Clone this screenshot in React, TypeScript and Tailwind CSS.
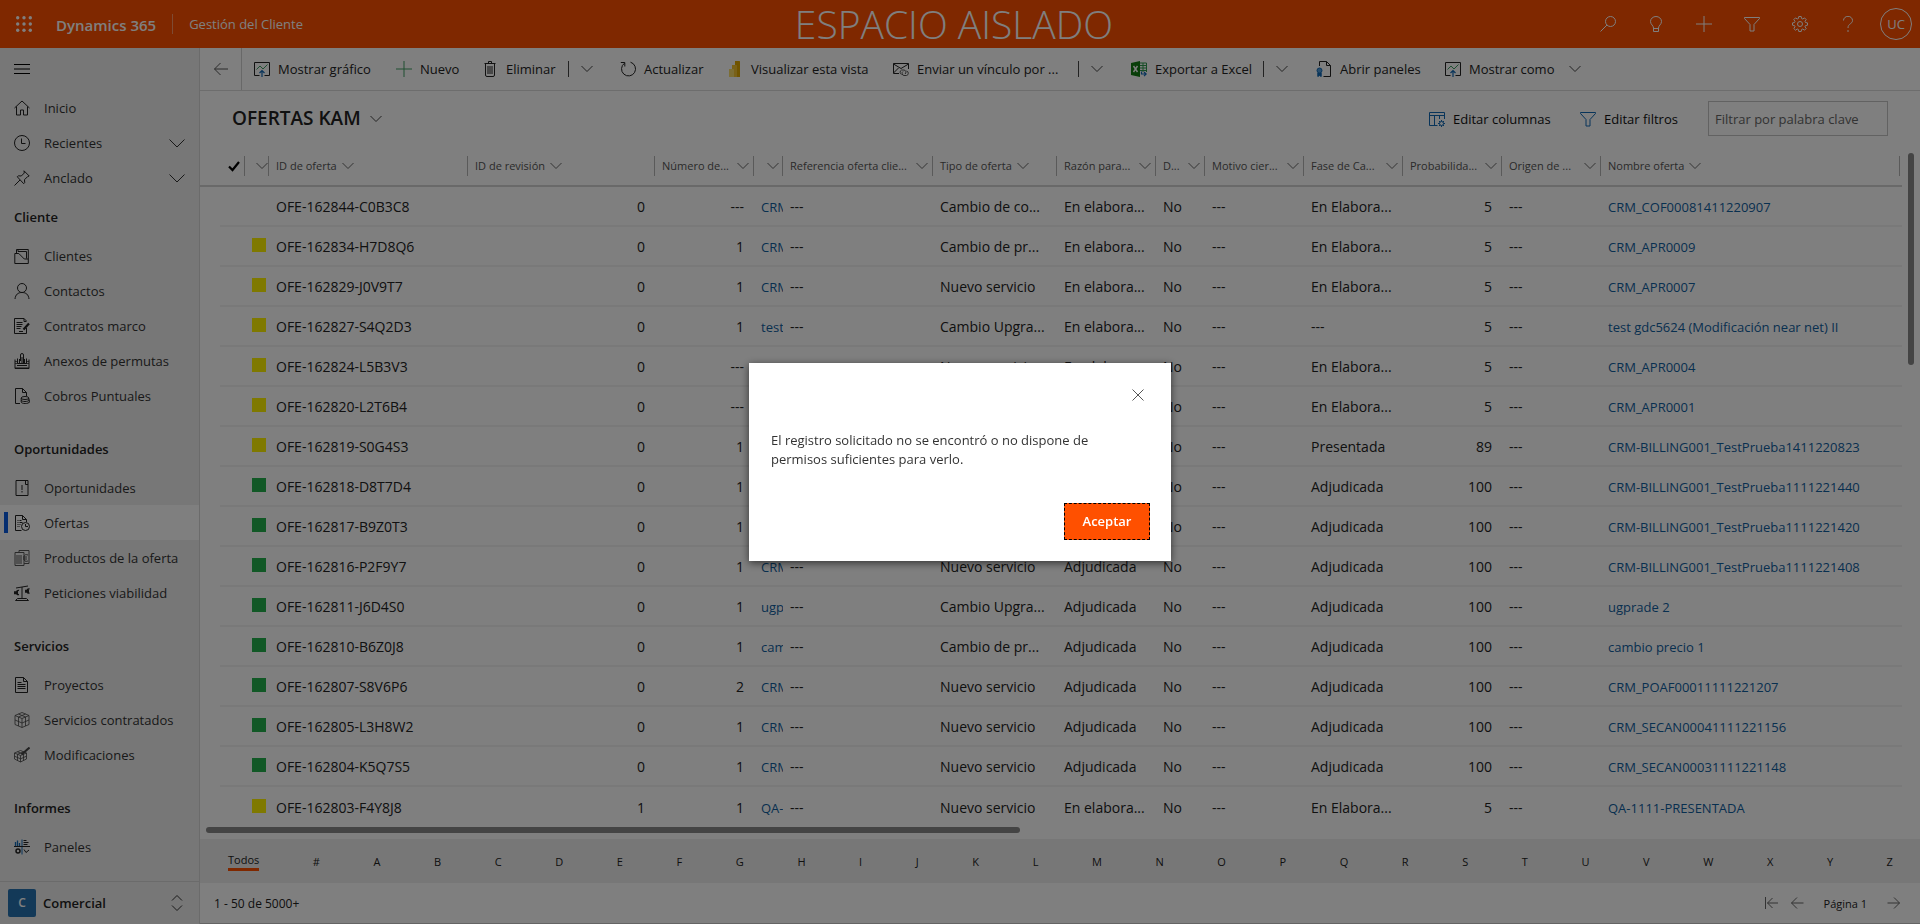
import type { ReactNode } from 'react';

type IconProps = { children: ReactNode; className?: string; size?: number };

function Icon({ children, className = '', size = 16 }: IconProps) {
  return (
    <svg
      viewBox={`0 0 ${size} ${size}`}
      width={size}
      height={size}
      fill="none"
      stroke="currentColor"
      strokeWidth="1"
      className={`shrink-0 ${className}`}
      aria-hidden="true"
    >
      {children}
    </svg>
  );
}

const Chevron = ({ className = 'text-[#444444]' }: { className?: string }) => (
  <svg viewBox="0 0 12 8" width="12" height="8" fill="none" stroke="currentColor" className={`shrink-0 ${className}`} aria-hidden="true">
    <path d="M.5 1l5.500 5.500L11.500 1" />
  </svg>
);

const ArrowLeft = () => (
  <Icon>
    <path d="M15 8H1.500M7.500 2L1.500 8l6 6" />
  </Icon>
);

const ChartIcon = () => (
  <Icon className="text-[#222222]">
    <path d="M5.500 14.500H.5V1.500h15v13h-5" />
    <path d="M2.500 8.500l3.500-3.500 3 3 4.500-4.500" stroke="#3f9f63" />
    <path d="M8 16V9.500M5.500 12L8 9.500l2.500 2.500" stroke="#1068b5" strokeWidth="1.200" />
  </Icon>
);

const PlusIcon = ({ className = '' }: { className?: string }) => (
  <Icon className={className}>
    <path d="M8 0v16M0 8h16" />
  </Icon>
);

const TrashIcon = () => (
  <Icon className="text-[#222222]">
    <path d="M2.500 2.500h11M6.500 2.500v-2h3v2M3.500 2.500v11.500q0 1.500 1.500 1.500h6q1.500 0 1.500-1.500V2.500M6 5v8M8 5v8M10 5v8" />
  </Icon>
);

const RefreshIcon = () => (
  <Icon className="text-[#222222]">
    <path d="M10.500 1.200A7 7 0 1 1 4.500 2.200M.8 1.500h4v4" />
  </Icon>
);

const PowerBiIcon = () => (
  <Icon>
    <path d="M8 0h4.500q.5 0 .5.500V16H8z" fill="#e0a800" stroke="none" />
    <path d="M5 4h4.500q.5 0 .5.500V16H5z" fill="#f2c230" stroke="none" />
    <path d="M2 8h4.500q.5 0 .5.500V16H2.500q-.5 0-.5-.5z" fill="#f8dc6a" stroke="none" />
  </Icon>
);

const MailLinkIcon = () => (
  <Icon className="text-[#222222]">
    <path d="M6 12.500H.5V2.500h15V8M.5 3L8 7.500 15.500 3M.5 12l5-5" />
    <path d="M8.500 13.500a2.500 2.500 0 0 1 0-4.500h2.500a2.200 2.200 0 0 1 1 4M13.500 10a2.300 2.300 0 0 1 0 4.500H11a2.200 2.200 0 0 1-1-4" stroke="#555555" />
  </Icon>
);

const ExcelIcon = () => (
  <Icon>
    <path d="M9 2h6.500v9M9 4.500h6.500M9 7h6.500M9 9.500h6.500M12 2v9" stroke="#2e9b4f" />
    <path d="M0 2l9-2v16l-9-2z" fill="#107c10" stroke="none" />
    <path d="M2.500 5l4 6M6.500 5l-4 6" stroke="#ffffff" strokeWidth="1.400" />
    <path d="M10.500 10.500v2.500h4.500M13 11l2.200 2-2.200 2.200" stroke="#1068b5" strokeWidth="1.200" />
  </Icon>
);

const PanelsIcon = () => (
  <Icon className="text-[#222222]">
    <path d="M3.500 5V.5h7l4 4v11h-7M10.500.5v4h4" />
    <circle cx="3.500" cy="9.500" r="2.500" fill="#4f9bd8" stroke="#1068b5" />
    <path d="M1.800 12v3.500l1.700-1 1.700 1V12" fill="#1068b5" stroke="#1068b5" />
  </Icon>
);

const ColumnsIcon = () => (
  <Icon className="text-[#1068b5]">
    <path d="M8.500 14.500H.5V1.500h15V8M.5 4.500h15M5.500 4.500v10M10.500 4.500V8" />
    <circle cx="12.500" cy="12.500" r="2" />
    <path d="M12.500 9v1.500M12.500 14.500V16M9 12.500h1.500M14.500 12.500H16M10 10l1 1M14 14l1 1M15 10l-1 1M11 14l-1 1" />
  </Icon>
);

const FunnelIcon = ({ className = '' }: { className?: string }) => (
  <Icon className={className}>
    <path d="M.5 1.500h15v1L10 8.500v6.500H6V8.500L.5 2.500z" />
  </Icon>
);

const SearchIcon = () => (
  <Icon>
    <circle cx="10.500" cy="5.500" r="5" />
    <path d="M7 9L.5 15.500" />
  </Icon>
);

const BulbIcon = () => (
  <Icon>
    <path d="M5.500 15.500v-3.500C5.500 9.500 2.500 8.500 2.500 5.500a5.500 5 0 0 1 11 0C13.500 8.500 10.500 9.500 10.500 12v3.500zM5.500 12.500h5" />
  </Icon>
);

const GearIcon = () => (
  <Icon>
    <circle cx="8" cy="8" r="2.500" />
    <path d="M6.800.5h2.400l.4 2 1.200.5L12.500 1.900l1.700 1.700-1.200 1.700.5 1.200 2 .4v2.300l-2 .4-.5 1.200 1.200 1.700-1.700 1.700-1.700-1.200-1.200.5-.4 2H6.800l-.4-2-1.200-.5-1.700 1.200-1.700-1.700 1.200-1.700-.5-1.200-2-.4V6.900l2-.4.5-1.200L1.800 3.600l1.700-1.700L5.200 3l1.200-.5z" />
  </Icon>
);

const HelpIcon = () => (
  <Icon>
    <path d="M3.500 4.500a4.300 4 0 0 1 9 0C12.500 8 8 7.500 8 12M8 14v2" />
  </Icon>
);

const navIcons: Record<string, ReactNode> = {
  Inicio: <path d="M.5 8L8 1l7.500 7M2.500 6.500v8.500h4v-5h3v5h4V6.500" />,
  Recientes: (
    <>
      <circle cx="8" cy="8" r="7.500" />
      <path d="M7.500 3.500v5h4" />
    </>
  ),
  Anclado: <path d="M10 .8L15.200 6l-1.700.7-3 3 .2 3-1 1L3.300 6.800l1-1 3 .2 3-3zM6 10L.5 15.500" />,
  Clientes: <path d="M.8 5.500v10h13.500V1.500H2.500v4M4 3.500h8.500v7M.8 5.500h4l5.500 5.500h4M4 1v2.500" />,
  Contactos: (
    <>
      <circle cx="8" cy="5" r="4.500" />
      <path d="M1 16c.5-4.500 3-6.500 7-6.500s6.500 2 7 6.500" />
    </>
  ),
  'Contratos marco': (
    <>
      <path d="M12.500 10v5.500H.5V.5H10l2.500 2.500M5 13.500h4" />
      <path d="M2.500 4.500h6M2.500 6.500h6M2.500 8.500h5M2.500 10.500h4" />
      <path d="M9.500 11.500l5.500-6" strokeWidth="2.200" />
      <path d="M10 .5v3h2.500" />
    </>
  ),
  'Anexos de permutas': (
    <>
      <path d="M1 6.500v9h14v-9M1 15h14M3.500 5.500v5h9v-5M3 12.500h10M5.500 6v5M10.500 6v5" />
      <path d="M6.500 8V2a1.500 1.500 0 0 1 3 0v8M8 4v6" />
      <path d="M1 8.500h2.500M12.500 8.500H15M1 10.500h14" strokeWidth=".7" />
    </>
  ),
  'Cobros Puntuales': (
    <>
      <path d="M6 15.500H1.500V.5h7l4 4V8M8.500.5v4h4" />
      <ellipse cx="11" cy="10" rx="3.800" ry="1.500" />
      <path d="M7.200 10v4c0 2 8 2 8 0M7.200 12c0 2 7.600 2 7.600 0v-2M15.300 11.500v3" />
    </>
  ),
  Oportunidades: <path d="M2 .5h12v15H2zM11.500.5v4h2.500M8 5v5M8 11v1.500" />,
  Ofertas: (
    <>
      <path d="M7.500 15.500h-6V.5h7l4 4V7M8.500.5v4h4" />
      <path d="M3.500 5.500h4M3.500 7.500h5M3.500 9.500h3M3.500 11.500h2.500" strokeDasharray="1 1 4 0" />
      <circle cx="11.500" cy="11.500" r="4" />
      <path d="M11.500 9v2.500h2.500" />
    </>
  ),
  'Productos de la oferta': (
    <g stroke="#555555">
      <path d="M1 2.500h9v13H1zM5 2.500v-2h10v13h-5" />
      <path d="M3 5v9M5 5v9M7 5v9" strokeWidth="1.500" stroke="#888888" />
      <path d="M14 5c-3-1-4 0-4 3s1 4 4 3M9 7h4M9 9h4" />
    </g>
  ),
  'Peticiones viabilidad': (
    <>
      <path d="M2 3l12-2M8 2v12M1.500 15.500h13l-2-2h-9z" />
      <path d="M5 5.500c-3-1-3.500 5 0 4M0 7h4M0 8.500h4M15.500 4c-3-1-3.500 5 0 4M11 5.500h4M11 7h4" strokeWidth="1.400" />
    </>
  ),
  Proyectos: (
    <>
      <path d="M1.500.5h8l4 4v11h-12zM9.500.5v4h4" />
      <path d="M3.500 5.500h4M3.500 7.500h8M3.500 9.500h8M3.500 11.500h8" />
    </>
  ),
  'Servicios contratados': (
    <g stroke="#444444" strokeWidth=".8">
      <path d="M8 .5l7 3v9l-7 3-7-3v-9zM1 3.500l7 3 7-3M8 6.500v9M1 8l7 3 7-3M4.500 2l7 3v9M11.500 2l-7 3v9" />
    </g>
  ),
  Modificaciones: (
    <g stroke="#444444" strokeWidth=".8">
      <path d="M6.500 3.500l6 2.500v6l-6 3-6-3V6zM.5 6l6 2.500L12.500 6M6.500 8.500V15M.5 9.200l6 2.600 6-2.600M3.500 4.800l6 2.500v6.200M9.500 4.800l-6 2.500v6.200" />
      <path d="M7.500 7.500L15.500.5" strokeWidth="2" />
    </g>
  ),
  Paneles: (
    <>
      <path d="M8 .5v15" stroke="#1068b5" />
      <path d="M0 7.500h16M9.500 1.500h3M9.500 3.500h5M9.500 5.500h4" />
      <path d="M1.500 3v4M3.500 1.500V7M5.500 4v3" stroke="#1068b5" strokeWidth="1.300" />
      <circle cx="4" cy="12" r="2" strokeWidth="1.500" />
      <path d="M10 10.500l2 3 3-2.500" />
    </>
  ),
};

function NavItem({ label, active = false, expandable = false }: { label: string; active?: boolean; expandable?: boolean }) {
  return (
    <li>
      <a
        href="#"
        aria-current={active ? 'page' : undefined}
        className={`flex h-[35px] items-center pr-[14px] text-[13px] text-[#333333] ${active ? 'bg-white' : ''}`}
      >
        <span className={`ml-1 mr-[6px] h-[21px] w-1 ${active ? 'bg-[#0a5ce0]' : ''}`} />
        <Icon className="mr-[14px] text-[#222222]">{navIcons[label]}</Icon>
        <span className="grow whitespace-nowrap pt-0.5">{label}</span>
        {expandable && (
          <Icon className="text-[#333333]">
            <path d="M.5 4.500L8 12l7.500-7.500" />
          </Icon>
        )}
      </a>
    </li>
  );
}

const navGroups = [
  { title: 'Cliente', items: ['Clientes', 'Contactos', 'Contratos marco', 'Anexos de permutas', 'Cobros Puntuales'] },
  { title: 'Oportunidades', items: ['Oportunidades', 'Ofertas', 'Productos de la oferta', 'Peticiones viabilidad'] },
  { title: 'Servicios', items: ['Proyectos', 'Servicios contratados', 'Modificaciones'] },
  { title: 'Informes', items: ['Paneles'] },
];

function Sidebar() {
  return (
    <aside className="flex w-[200px] shrink-0 flex-col border-r border-[#d6d6d6] bg-[#efefef]">
      <button type="button" aria-label="Menú" className="flex h-[42px] items-center pl-[14px]">
        <Icon className="text-black">
          <path d="M0 3.500h16M0 8h16M0 12.500h16" />
        </Icon>
      </button>
      <nav className="min-h-0 grow overflow-hidden">
        <ul>
          <NavItem label="Inicio" />
          <NavItem label="Recientes" expandable />
          <NavItem label="Anclado" expandable />
        </ul>
        {navGroups.map((group, index) => (
          <section key={group.title} className={index > 0 ? 'pt-[14px]' : ''}>
            <h2 className="flex h-[43px] items-center pl-[14px] pt-0.5 text-[13px] font-semibold text-[#222222]">{group.title}</h2>
            <ul>
              {group.items.map((item) => (
                <NavItem key={item} label={item} active={item === 'Ofertas'} />
              ))}
            </ul>
          </section>
        ))}
      </nav>
      <button type="button" className="flex h-[43px] shrink-0 items-center border-t border-[#d6d6d6] pl-2 pr-4 text-left">
        <span className="flex size-7 items-center justify-center rounded-[2px] bg-[#2672b0] text-xs font-semibold text-white">C</span>
        <span className="ml-[7px] grow pt-0.5 text-[13px] font-semibold text-[#222222]">Comercial</span>
        <svg viewBox="0 0 12 16" width="12" height="16" fill="none" stroke="#333333" aria-hidden="true">
          <path d="M1 5.500l5-5 5 5M1 10.500l5 5 5-5" />
        </svg>
      </button>
    </aside>
  );
}

function Header() {
  const actions: [string, ReactNode][] = [
    ['Buscar', <SearchIcon key="s" />],
    ['Ideas', <BulbIcon key="b" />],
    ['Crear', <PlusIcon key="p" />],
    ['Filtro avanzado', <FunnelIcon key="f" />],
    ['Configuración', <GearIcon key="g" />],
    ['Ayuda', <HelpIcon key="h" />],
  ];
  return (
    <header className="grid h-12 shrink-0 grid-cols-[1fr_auto_1fr] items-center bg-[#ff5000] text-white">
      <div className="flex items-center">
        <button type="button" aria-label="Iniciador de aplicaciones" className="flex w-12 justify-center">
          <svg viewBox="0 0 16 16" width="16" height="16" fill="currentColor" aria-hidden="true">
            {[1.7, 8, 14.3].map((y) => [1.7, 8, 14.3].map((x) => <circle key={`${x}-${y}`} cx={x} cy={y} r="1.700" />))}
          </svg>
        </button>
        <a href="#" className="ml-2 pt-0.5 text-[15px] font-semibold">Dynamics 365</a>
        <span className="ml-4 h-5 w-px bg-white/40" />
        <a href="#" className="ml-4 pt-0.5 text-[13px]">Gestión del Cliente</a>
      </div>
      <p className="pr-3 text-[39px] leading-[48px] font-light">ESPACIO AISLADO</p>
      <div className="flex items-center justify-end">
        {actions.map(([label, icon]) => (
          <button key={label} type="button" aria-label={label} className="flex h-12 w-12 items-center justify-center">
            {icon}
          </button>
        ))}
        <button type="button" aria-label="Cuenta" className="mx-2 flex size-8 items-center justify-center rounded-full border border-white pt-0.5 text-[13px]">
          UC
        </button>
      </div>
    </header>
  );
}

function Command({ icon, label, width }: { icon: ReactNode; label: string; width: string }) {
  return (
    <button type="button" className={`flex h-full shrink-0 items-center gap-2 whitespace-nowrap text-left ${width}`}>
      {icon}
      <span className="pt-0.5">{label}</span>
    </button>
  );
}

function SplitChevron({ label, width, divided = true }: { label: string; width: string; divided?: boolean }) {
  return (
    <button type="button" aria-label={label} className={`flex h-full shrink-0 items-center gap-3 ${width}`}>
      {divided && <span className="h-4 w-px bg-[#444444]" />}
      <Chevron />
    </button>
  );
}

function CommandBar() {
  return (
    <div className="flex h-[43px] shrink-0 items-center overflow-hidden border-b border-[#dadada] text-[13px] text-[#222222]">
      <button type="button" aria-label="Atrás" className="mr-3 flex h-full w-[42px] shrink-0 items-center justify-center border-r border-[#d0d0d0] text-[#555555]">
        <ArrowLeft />
      </button>
      <Command icon={<ChartIcon />} label="Mostrar gráfico" width="w-[142px]" />
      <Command icon={<PlusIcon className="text-[#3f9f63]" />} label="Nuevo" width="w-[86px]" />
      <Command icon={<TrashIcon />} label="Eliminar" width="w-[86px]" />
      <SplitChevron label="Más opciones de eliminar" width="w-[52px]" />
      <Command icon={<RefreshIcon />} label="Actualizar" width="w-[107px]" />
      <Command icon={<PowerBiIcon />} label="Visualizar esta vista" width="w-[166px]" />
      <Command icon={<MailLinkIcon />} label="Enviar un vínculo por ..." width="w-[185px]" />
      <SplitChevron label="Más opciones de envío" width="w-[53px]" />
      <Command icon={<ExcelIcon />} label="Exportar a Excel" width="w-[132px]" />
      <SplitChevron label="Más opciones de exportación" width="w-[53px]" />
      <Command icon={<PanelsIcon />} label="Abrir paneles" width="w-[129px]" />
      <Command icon={<ChartIcon />} label="Mostrar como" width="w-[124px]" />
      <SplitChevron label="Más opciones de visualización" width="w-[20px]" divided={false} />
    </div>
  );
}

function ViewBar() {
  return (
    <div className="flex h-[55px] shrink-0 items-center pl-8 pr-8 text-[13px] text-[#111111]">
      <button type="button" className="flex items-center gap-[9px] text-[19px] font-semibold text-[#222222]">
        <span>OFERTAS KAM</span>
        <Chevron />
      </button>
      <div className="ml-auto flex items-center">
        <button type="button" className="flex w-[151px] items-center gap-2">
          <ColumnsIcon />
          <span className="pt-0.5">Editar columnas</span>
        </button>
        <button type="button" className="flex w-[128px] items-center gap-2">
          <FunnelIcon className="text-[#1068b5]" />
          <span className="pt-0.5">Editar filtros</span>
        </button>
        <input
          type="search"
          aria-label="Filtrar por palabra clave"
          placeholder="Filtrar por palabra clave"
          className="h-[35px] w-[180px] border border-[#c4c4c4] bg-white px-[6px] text-[13px] placeholder:text-[#666666]"
        />
      </div>
    </div>
  );
}

type Column = { label: string; width: string; cut?: boolean };

const columns: Column[] = [
  { label: '', width: 'w-6', cut: true },
  { label: 'ID de oferta', width: 'w-[199px]' },
  { label: 'ID de revisión', width: 'w-[187px]' },
  { label: 'Número de...', width: 'w-[99px]', cut: true },
  { label: '', width: 'w-[29px]', cut: true },
  { label: 'Referencia oferta clie...', width: 'w-[150px]', cut: true },
  { label: 'Tipo de oferta', width: 'w-[124px]' },
  { label: 'Razón para...', width: 'w-[99px]', cut: true },
  { label: 'D...', width: 'w-[49px]', cut: true },
  { label: 'Motivo cier...', width: 'w-[99px]', cut: true },
  { label: 'Fase de Ca...', width: 'w-[99px]', cut: true },
  { label: 'Probabilida...', width: 'w-[99px]', cut: true },
  { label: 'Origen de ...', width: 'w-[99px]', cut: true },
  { label: 'Nombre oferta', width: '' },
];

type Row = [flag: '' | 'y' | 'g', id: string, rev: string, num: string, short: string, tipo: string, razon: string, fase: string, prob: string, nombre: string];

const rows: Row[] = [
  ['', 'OFE-162844-C0B3C8', '0', '---', 'CRM', 'Cambio de co...', 'En elabora...', 'En Elabora...', '5', 'CRM_COF00081411220907'],
  ['y', 'OFE-162834-H7D8Q6', '0', '1', 'CRM', 'Cambio de pr...', 'En elabora...', 'En Elabora...', '5', 'CRM_APR0009'],
  ['y', 'OFE-162829-J0V9T7', '0', '1', 'CRM', 'Nuevo servicio', 'En elabora...', 'En Elabora...', '5', 'CRM_APR0007'],
  ['y', 'OFE-162827-S4Q2D3', '0', '1', 'test', 'Cambio Upgra...', 'En elabora...', '---', '5', 'test gdc5624 (Modificación near net) II'],
  ['y', 'OFE-162824-L5B3V3', '0', '---', 'CRM', 'Nuevo servicio', 'En elabora...', 'En Elabora...', '5', 'CRM_APR0004'],
  ['y', 'OFE-162820-L2T6B4', '0', '---', 'CRM', 'Nuevo servicio', 'En elabora...', 'En Elabora...', '5', 'CRM_APR0001'],
  ['y', 'OFE-162819-S0G4S3', '0', '1', 'CRM', 'Nuevo servicio', 'Presentada', 'Presentada', '89', 'CRM-BILLING001_TestPrueba1411220823'],
  ['g', 'OFE-162818-D8T7D4', '0', '1', 'CRM', 'Nuevo servicio', 'Adjudicada', 'Adjudicada', '100', 'CRM-BILLING001_TestPrueba1111221440'],
  ['g', 'OFE-162817-B9Z0T3', '0', '1', 'CRM', 'Nuevo servicio', 'Adjudicada', 'Adjudicada', '100', 'CRM-BILLING001_TestPrueba1111221420'],
  ['g', 'OFE-162816-P2F9Y7', '0', '1', 'CRM', 'Nuevo servicio', 'Adjudicada', 'Adjudicada', '100', 'CRM-BILLING001_TestPrueba1111221408'],
  ['g', 'OFE-162811-J6D4S0', '0', '1', 'ugp', 'Cambio Upgra...', 'Adjudicada', 'Adjudicada', '100', 'ugprade 2'],
  ['g', 'OFE-162810-B6Z0J8', '0', '1', 'cam', 'Cambio de pr...', 'Adjudicada', 'Adjudicada', '100', 'cambio precio 1'],
  ['g', 'OFE-162807-S8V6P6', '0', '2', 'CRM', 'Nuevo servicio', 'Adjudicada', 'Adjudicada', '100', 'CRM_POAF00011111221207'],
  ['g', 'OFE-162805-L3H8W2', '0', '1', 'CRM', 'Nuevo servicio', 'Adjudicada', 'Adjudicada', '100', 'CRM_SECAN00041111221156'],
  ['g', 'OFE-162804-K5Q7S5', '0', '1', 'CRM', 'Nuevo servicio', 'Adjudicada', 'Adjudicada', '100', 'CRM_SECAN00031111221148'],
  ['y', 'OFE-162803-F4Y8J8', '1', '1', 'QA-', 'Nuevo servicio', 'En elabora...', 'En Elabora...', '5', 'QA-1111-PRESENTADA'],
];

const flagColors = { '': '', y: 'bg-[#fff200]', g: 'bg-[#22b14c]' };
const cell = 'overflow-hidden whitespace-nowrap pl-[7px]';
const linkCell = 'pt-[3px] text-[13px] text-[#1160a0]';

function Grid() {
  return (
    <div className="flex min-h-0 grow flex-col">
      <div className="flex min-h-0 grow overflow-hidden pr-[6px]">
        <div className="min-w-0 grow pr-[6px]">
          <table className="w-full table-fixed border-separate border-spacing-0 text-left text-[14px] text-[#222222]">
            <thead className="text-[11px] text-[#555555]">
              <tr>
                <th scope="col" className="h-[41px] w-[45px] border-b-2 border-[#d2d2d2] p-0 align-middle">
                  <div className="flex h-5 items-center justify-end border-r border-[#b4b4b4] pr-1">
                    <svg viewBox="0 0 12 12" width="12" height="12" fill="none" stroke="#000000" strokeWidth="2.200" role="img" aria-label="Seleccionar todo">
                      <path d="M1 6.500l3.500 3.500L11 2" />
                    </svg>
                  </div>
                </th>
                {columns.map((col, i) => (
                  <th
                    key={i}
                    scope="col"
                    className={`border-b-2 border-[#d2d2d2] py-0 pl-0 align-middle font-normal ${col.width} ${i === columns.length - 1 ? 'pr-0.5' : 'pr-0'}`}
                  >
                    <div className={`flex h-5 items-center gap-[5px] whitespace-nowrap border-r border-[#b4b4b4] ${col.label ? 'pl-[7px] pr-1' : i === 0 ? '' : 'pr-[3px]'} ${col.cut ? 'justify-end' : ''}`}>
                      {col.label && <span className={`pt-0.5 ${col.cut ? 'grow' : ''}`}>{col.label}</span>}
                      <Chevron className="text-[#666666]" />
                    </div>
                  </th>
                ))}
              </tr>
            </thead>
            <tbody>
              {rows.map(([flag, id, rev, num, short, tipo, razon, fase, prob, nombre], index) => {
                const line = index < rows.length - 1 ? 'border-b-2 border-[#f3f3f3]' : '';
                const td = `${cell} ${line}`;
                return (
                  <tr key={id} className="h-10">
                    <td className="h-10 p-0 pl-5">
                      <div className={`h-full ${line}`} />
                    </td>
                    <td className={`p-0 pb-0.5 pl-[7px] ${line}`}>{flag && <div className={`size-[14px] ${flagColors[flag]}`} />}</td>
                    <td className={td}>{id}</td>
                    <td className={`${td} pr-[10px] text-right`}>{rev}</td>
                    <td className={`${td} pr-[10px] text-right`}>{num}</td>
                    <td className={`${td} ${linkCell}`}><a href="#">{short}</a></td>
                    <td className={td}>---</td>
                    <td className={td}>{tipo}</td>
                    <td className={td}>{razon}</td>
                    <td className={td}>No</td>
                    <td className={td}>---</td>
                    <td className={td}>{fase}</td>
                    <td className={`${td} pr-[10px] text-right`}>{prob}</td>
                    <td className={td}>---</td>
                    <td className={`${td} ${linkCell}`}><a href="#">{nombre}</a></td>
                  </tr>
                );
              })}
            </tbody>
          </table>
        </div>
        <div className="mt-[7px] h-[212px] w-[6px] shrink-0 rounded-full bg-[#888888]" />
      </div>
      <div className="flex h-3 shrink-0 pl-[6px]">
        <div className="h-[6px] w-[47.5%] rounded-full bg-[#888888]" />
      </div>
    </div>
  );
}

const letters = '#ABCDEFGHIJKLMNOPQRSTUVWXYZ'.split('');

function Footer() {
  return (
    <footer className="shrink-0 text-[12px] text-[#222222]">
      <div className="flex h-11 items-center justify-between bg-[#efefef] pl-7 pr-[27px] text-[11px]">
        <button type="button" className="border-b-3 border-[#ff5000] leading-4">Todos</button>
        {letters.map((letter) => (
          <button key={letter} type="button" className="pt-[3px]">{letter}</button>
        ))}
      </div>
      <div className="flex h-[41px] items-center border-b border-[#c8c8c8] pl-[14px] pr-[19px]">
        <span className="pt-0.5">1 - 50 de 5000+</span>
        <div className="ml-auto flex items-center text-[#666666]">
          <button type="button" aria-label="Primera página" className="mr-3">
            <Icon size={14}><path d="M1.500 1v12M14 7H3.500M8.500 2l-5 5 5 5" /></Icon>
          </button>
          <button type="button" aria-label="Página anterior" className="mr-5">
            <Icon size={14}><path d="M13.500 7H1.500M7 1.500L1.500 7 7 12.500" /></Icon>
          </button>
          <span className="mr-5 pt-0.5 text-[11px] text-[#222222]">Página 1</span>
          <button type="button" aria-label="Página siguiente">
            <Icon size={14}><path d="M.5 7h12M7 1.500L12.500 7 7 12.500" /></Icon>
          </button>
        </div>
      </div>
    </footer>
  );
}

function ErrorDialog() {
  return (
    <div className="fixed inset-0 z-10 flex items-center justify-center bg-black/50">
      <div role="dialog" aria-modal="true" aria-labelledby="dialog-text" className="w-[422px] bg-white pb-[21px] pl-[22px] pr-[21px] pt-6 shadow-[0_2px_8px_rgba(0,0,0,0.6)]">
        <div className="flex justify-end pr-1">
          <button type="button" aria-label="Cerrar" className="flex size-4 items-center justify-center text-[#555555]">
            <svg viewBox="0 0 12 12" width="12" height="12" fill="none" stroke="currentColor" aria-hidden="true">
              <path d="M.5.5l11 11M11.500.5l-11 11" />
            </svg>
          </button>
        </div>
        <p id="dialog-text" className="mt-7 w-[340px] text-[13px] leading-[19px] text-[#333333]">
          El registro solicitado no se encontró o no dispone de permisos suficientes para verlo.
        </p>
        <div className="mt-[34px] flex justify-end">
          <button type="button" className="h-[37px] w-[86px] border border-dashed border-black bg-[#ff5000] text-[13px] font-semibold text-white">
            Aceptar
          </button>
        </div>
      </div>
    </div>
  );
}

export default function App() {
  return (
    <div className="flex h-screen flex-col overflow-hidden bg-white font-['Open_Sans','Noto_Sans',sans-serif]">
      <Header />
      <div className="flex min-h-0 grow">
        <Sidebar />
        <main className="flex min-w-0 grow flex-col">
          <CommandBar />
          <ViewBar />
          <Grid />
          <Footer />
        </main>
      </div>
      <ErrorDialog />
    </div>
  );
}
